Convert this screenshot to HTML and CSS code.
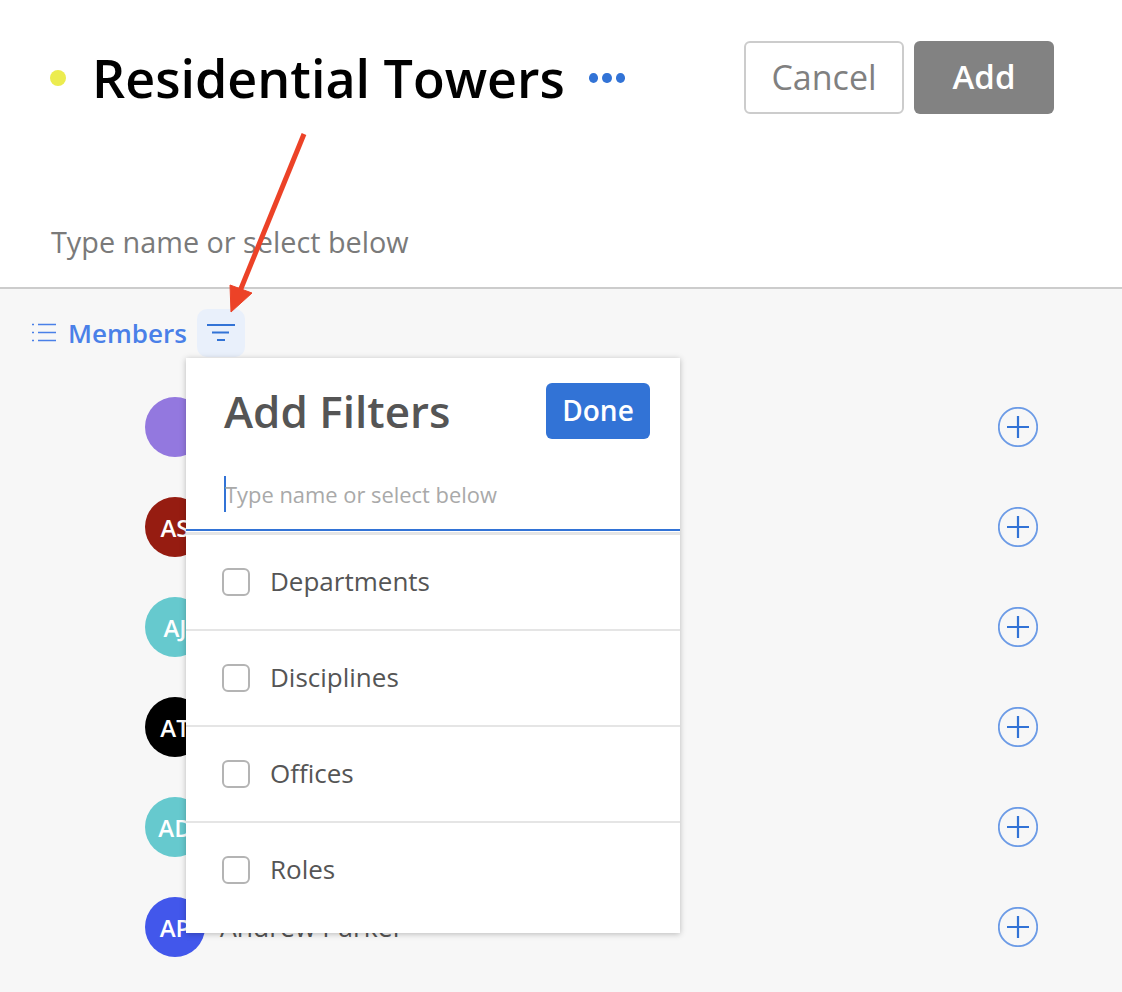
FILE: index.html
```html
<!DOCTYPE html>
<html lang="en">
<head>
<meta charset="utf-8">
<title>Residential Towers</title>
<link rel="stylesheet" href="styles.css">
</head>
<body>
<div class="page">
  <header class="header">
    <span class="status-dot"></span>
    <h1 class="title">Residential Towers</h1>
    <span class="more"><i></i><i></i><i></i></span>
    <div class="actions">
      <button class="btn btn-cancel">Cancel</button>
      <button class="btn btn-add">Add</button>
    </div>
  </header>
  <div class="search">Type name or select below</div>
  <section class="members">
    <div class="members-head">
      <svg class="list-icon" width="25" height="22" viewBox="0 0 25 22" fill="none" stroke="#4a80e8" stroke-width="1.6">
        <path d="M7 2.500h18M7 10.500h18M7 18.500h18"/>
        <path d="M1 2.500h2M1 10.500h2M1 18.500h2"/>
      </svg>
      <span class="members-label">Members</span>
      <span class="filter-btn">
        <svg width="28" height="20" viewBox="0 0 28 20" fill="none" stroke="#3273d6" stroke-width="2.200">
          <path d="M0 2h28M5 9.500h17M10 17h8"/>
        </svg>
      </span>
    </div>
    <ul class="rows">
      <li class="row"><span class="avatar av-purple"></span><span class="plus"><svg width="40" height="40" viewBox="0 0 40 40" fill="none"><circle cx="20" cy="20" r="19.200" stroke="#6c9be6" stroke-width="1.800"/><path d="M20 9v22M9 20h22" stroke="#3273d6" stroke-width="2.200"/></svg></span></li>
      <li class="row"><span class="avatar av-red">AS</span><span class="plus"><svg width="40" height="40" viewBox="0 0 40 40" fill="none"><circle cx="20" cy="20" r="19.200" stroke="#6c9be6" stroke-width="1.800"/><path d="M20 9v22M9 20h22" stroke="#3273d6" stroke-width="2.200"/></svg></span></li>
      <li class="row"><span class="avatar av-teal">AJ</span><span class="plus"><svg width="40" height="40" viewBox="0 0 40 40" fill="none"><circle cx="20" cy="20" r="19.200" stroke="#6c9be6" stroke-width="1.800"/><path d="M20 9v22M9 20h22" stroke="#3273d6" stroke-width="2.200"/></svg></span></li>
      <li class="row"><span class="avatar av-black">AT</span><span class="plus"><svg width="40" height="40" viewBox="0 0 40 40" fill="none"><circle cx="20" cy="20" r="19.200" stroke="#6c9be6" stroke-width="1.800"/><path d="M20 9v22M9 20h22" stroke="#3273d6" stroke-width="2.200"/></svg></span></li>
      <li class="row"><span class="avatar av-teal">AD</span><span class="plus"><svg width="40" height="40" viewBox="0 0 40 40" fill="none"><circle cx="20" cy="20" r="19.200" stroke="#6c9be6" stroke-width="1.800"/><path d="M20 9v22M9 20h22" stroke="#3273d6" stroke-width="2.200"/></svg></span></li>
      <li class="row"><span class="avatar av-blue">AP</span><span class="name">Andrew Parker</span><span class="plus"><svg width="40" height="40" viewBox="0 0 40 40" fill="none"><circle cx="20" cy="20" r="19.200" stroke="#6c9be6" stroke-width="1.800"/><path d="M20 9v22M9 20h22" stroke="#3273d6" stroke-width="2.200"/></svg></span></li>
    </ul>
  </section>

  <div class="panel">
    <div class="panel-head">
      <h2 class="panel-title">Add Filters</h2>
      <button class="btn-done">Done</button>
    </div>
    <div class="panel-input"><span class="caret"></span><span>Type name or select below</span></div>
    <ul class="options">
      <li class="option"><span class="check"></span>Departments</li>
      <li class="option"><span class="check"></span>Disciplines</li>
      <li class="option"><span class="check"></span>Offices</li>
      <li class="option"><span class="check"></span>Roles</li>
    </ul>
  </div>

  <svg class="arrow" width="90" height="190" viewBox="0 0 90 190" fill="none">
    <path d="M75 3L11 160" stroke="#ec4227" stroke-width="5"/>
    <path d="M2 181L1 154L23 162Z" fill="#ec4227" stroke="#ec4227" stroke-width="1"/>
  </svg>
</div>
</body>
</html>
```
FILE: styles.css
```css
* { box-sizing: border-box; }
html, body { margin: 0; padding: 0; }
body { background: #fff; font-family: "Open Sans", "Noto Sans", sans-serif; }
.page { position: relative; width: 1122px; height: 992px; overflow: hidden; }

.header { display: flex; align-items: center; height: 114px; padding: 41px 68px 0 50px; }
.status-dot { width: 16px; height: 16px; border-radius: 50%; background: #ecec4f; flex: none; margin-right: 26px; }
.title { margin: 0; font-size: 52px; font-weight: 600; line-height: 73px; color: #000; white-space: nowrap; }
.more { display: flex; gap: 4px; margin-left: 24px; }
.more i { width: 9.500px; height: 10px; border-radius: 50%; background: #3273d6; display: block; }
.actions { display: flex; gap: 10px; margin-left: auto; }
.btn { font-family: inherit; font-size: 34px; height: 73px; border-radius: 6px; padding: 0 0 2px; }
.btn-cancel { width: 160px; background: #fff; border: 2px solid #ccc; color: #808080; }
.btn-add { width: 140px; background: #828282; border: 0; color: #fff; font-size: 33px; font-weight: 600; }

.search { height: 175px; padding: 109px 0 0 51px; font-size: 28.800px; line-height: 37px; color: #7a7a7a; border-bottom: 2px solid #ccc; }

.members { background: #f7f7f7; height: 703px; }
.members-head { display: flex; align-items: center; height: 68px; padding: 20px 0 0 31px; }
.list-icon { flex: none; }
.members-label { margin-left: 12px; font-size: 26px; font-weight: 600; color: #4a80e8; line-height: 48px; }
.filter-btn { display: flex; align-items: center; justify-content: center; width: 48px; height: 48px; margin-left: 10px; border-radius: 10px; background: #e9f0fb; }

.rows { list-style: none; margin: 0; padding: 40px 84px 0 145px; }
.row { display: flex; align-items: center; height: 100px; padding-bottom: 40px; }
.avatar { width: 60px; height: 60px; border-radius: 50%; flex: none; display: flex; align-items: center; justify-content: center; color: #fff; font-size: 24px; font-weight: 600; overflow: hidden; white-space: nowrap; }
.av-purple { background: #9378df; }
.av-red { background: #961c11; }
.av-teal { background: #66c9ce; }
.av-black { background: #000; }
.av-blue { background: #4257eb; }
.name { margin-left: 15px; font-size: 26.500px; color: #555; white-space: nowrap; }
.plus { margin-left: auto; width: 40px; height: 40px; flex: none; }

.panel { position: absolute; left: 186px; top: 358px; width: 494px; height: 575px; background: #fff; box-shadow: 0 1px 6px rgba(0,0,0,0.25); }
.panel-head { display: flex; align-items: flex-start; justify-content: space-between; height: 98px; padding: 25px 30px 0 38px; }
.panel-title { margin: 0; font-size: 44px; line-height: 56px; font-weight: 600; color: #555; }
.btn-done { width: 104px; height: 56px; border: 0; border-radius: 6px; background: #3273d6; color: #fff; font-family: inherit; font-size: 28px; font-weight: 600; padding: 0 0 2px; }
.panel-input { display: flex; align-items: center; height: 75px; padding: 3px 0 0 38px; border-bottom: 2px solid #3273d6; font-size: 21.900px; color: #a9a9a9; box-shadow: 0 1px 0 #fff, 0 4px 0 #e5e5e5; }
.caret { width: 2px; height: 36px; background: #3273d6; margin-right: -1px; flex: none; }
.options { list-style: none; margin: 4px 0 0; padding: 0; }
.option { display: flex; align-items: center; height: 96px; padding-left: 36px; padding-bottom: 2px; font-size: 26px; color: #555; border-bottom: 2px solid #e5e5e5; }
.option:last-child { border-bottom-color: transparent; }
.check { width: 28px; height: 28px; border: 2px solid #b4b4b4; border-radius: 6px; margin: 2px 20px 0 0; flex: none; background: #fff; }

.arrow { position: absolute; left: 229px; top: 131px; }
```
